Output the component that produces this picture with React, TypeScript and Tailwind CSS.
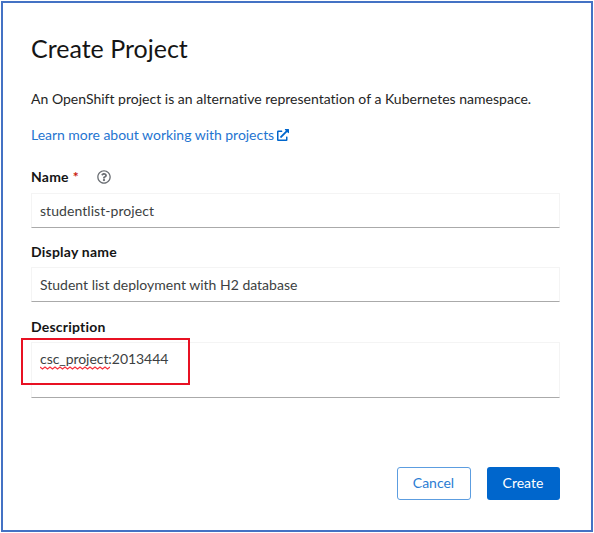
import type { ReactNode } from "react";
import { FaExternalLinkAlt, FaRegQuestionCircle } from "react-icons/fa";

function Label({ children }: { children: ReactNode }) {
  return (
    <div className="flex h-5 items-center text-[14px] font-bold leading-5 tracking-[0.22px] text-[#151515]">
      {children}
    </div>
  );
}

const fieldBox =
  "w-full border border-[#f4f4f4] border-b-[#aaaaaa] px-2 text-[14px] text-[#3c3f42] bg-white";

function Squiggle() {
  return (
    <svg className="absolute -bottom-[1px] left-0 h-1 w-[70px]" viewBox="0 0 70 4" fill="none">
      <path
        d="M0 1 L2.5 3 L5 1 L7.5 3 L10 1 L12.5 3 L15 1 L17.5 3 L20 1 L22.5 3 L25 1 L27.5 3 L30 1 L32.5 3 L35 1 L37.5 3 L40 1 L42.5 3 L45 1 L47.5 3 L50 1 L52.5 3 L55 1 L57.5 3 L60 1 L62.5 3 L65 1 L67.5 3 L70 1"
        stroke="#f5333f"
        strokeWidth="1.2"
      />
    </svg>
  );
}

export default function App() {
  return (
    <div className="h-[533px] w-[594px] bg-white p-px font-['Lato',sans-serif]">
      <main className="flex h-[531px] w-[592px] flex-col border-2 border-[#4472c4] pl-7 pr-[31.5px] pt-[31px]">
        <h1 className="h-[33px] whitespace-nowrap text-[25px] leading-7 text-[#151515]">Create Project</h1>
        <p className="mt-[22px] h-5 whitespace-nowrap text-[14px] leading-5 tracking-[0.01px] text-[#252525]">
          An OpenShift project is an alternative representation of a Kubernetes namespace.
        </p>
        <a className="mt-4 flex h-5 items-center whitespace-nowrap text-[14px] leading-5 text-[#1f75d1]" href="#">
          <span className="tracking-[-0.03px]">Learn more about working with projects</span>
          <FaExternalLinkAlt className="ml-[3px] size-3 text-[#0066cc]" />
        </a>

        <div className="mt-[22px]">
          <Label>
            <span>Name</span>
            <span className="ml-1 text-[#c9190b]">*</span>
            <FaRegQuestionCircle className="-mt-px ml-[18px] size-[14px] text-[#6a6e73]" />
          </Label>
          <div className={`${fieldBox} mt-[6px] flex h-[35px] items-center tracking-[0.06px]`}>
            studentlist-project
          </div>
        </div>

        <div className="mt-[14px]">
          <Label>Display name</Label>
          <div className={`${fieldBox} mt-[5px] flex h-[35px] items-center`}>
            Student list deployment with H2 database
          </div>
        </div>

        <div className="mt-[15px]">
          <Label>Description</Label>
          <div className={`${fieldBox} relative mt-[5px] h-[56px] pt-[6px] leading-5 tracking-[-0.05px]`}>
            <span className="relative inline-block">
              csc_project
              <Squiggle />
            </span>
            <span>:2013444</span>
            <div className="absolute -left-[11px] -top-[5px] h-[47px] w-[169px] border-2 border-[#e81123]" />
          </div>
        </div>

        <div className="mt-[69px] flex justify-end gap-4 text-[14px]">
          <button className="h-[33px] w-[74px] rounded-[3px] border border-[#5c9de0] pb-0.5 text-[#2b7cd3]">Cancel</button>
          <button className="h-[33px] w-[73px] rounded-[3px] bg-[#0066cc] pb-0.5 text-white">Create</button>
        </div>
      </main>
    </div>
  );
}
